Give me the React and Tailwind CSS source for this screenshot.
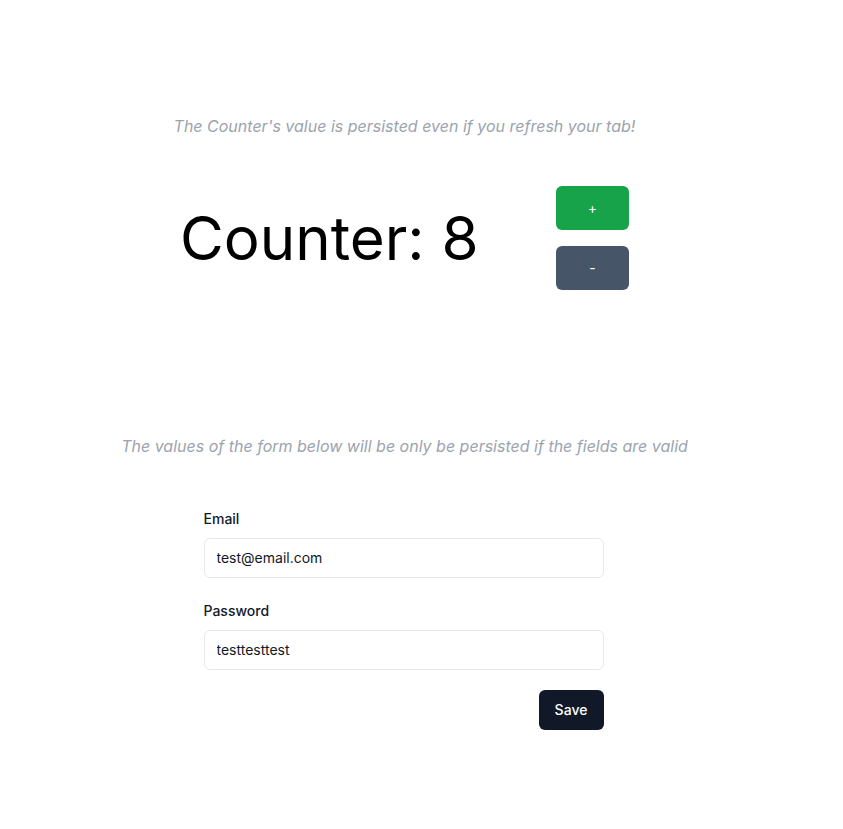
export default function App() {
  return (
    <div className="w-[809px] flex flex-col items-center bg-white" style={{ fontFamily: "Inter, 'Noto Sans', sans-serif" }}>
      <p className="pt-[114px] text-base leading-6 italic text-[#9ca3af]">
        The Counter's value is persisted even if you refresh your tab!
      </p>
      <div className="mt-12 w-[449px] flex items-center justify-between">
        <span className="text-6xl leading-none text-black">Counter: 8</span>
        <div className="flex flex-col gap-4">
          <button className="w-[73px] h-[44px] rounded-md bg-[#16a34a] text-white text-sm">+</button>
          <button className="w-[73px] h-[44px] rounded-md bg-[#475569] text-white text-sm">-</button>
        </div>
      </div>
      <p className="mt-[144px] text-base leading-6 italic text-[#9ca3af]">
        The values of the form below will be only be persisted if the fields are valid
      </p>
      <form className="mt-[51px] mr-[2px] w-[400px] flex flex-col">
        <label className="text-sm leading-5 font-medium text-[#111827]">Email</label>
        <input
          className="mt-[9px] h-10 w-full rounded-md border border-[#e5e7eb] px-3 pb-px text-sm text-[#111827] outline-none"
          defaultValue="test@email.com"
        />
        <label className="mt-[23px] text-sm leading-5 font-medium text-[#111827]">Password</label>
        <input
          className="mt-[9px] h-10 w-full rounded-md border border-[#e5e7eb] px-3 pb-px text-sm text-[#111827] outline-none"
          defaultValue="testtesttest"
        />
        <div className="mt-5 flex justify-end">
          <button type="button" className="h-10 w-[65px] rounded-md bg-[#111827] text-white text-sm font-medium">Save</button>
        </div>
      </form>
    </div>
  );
}
